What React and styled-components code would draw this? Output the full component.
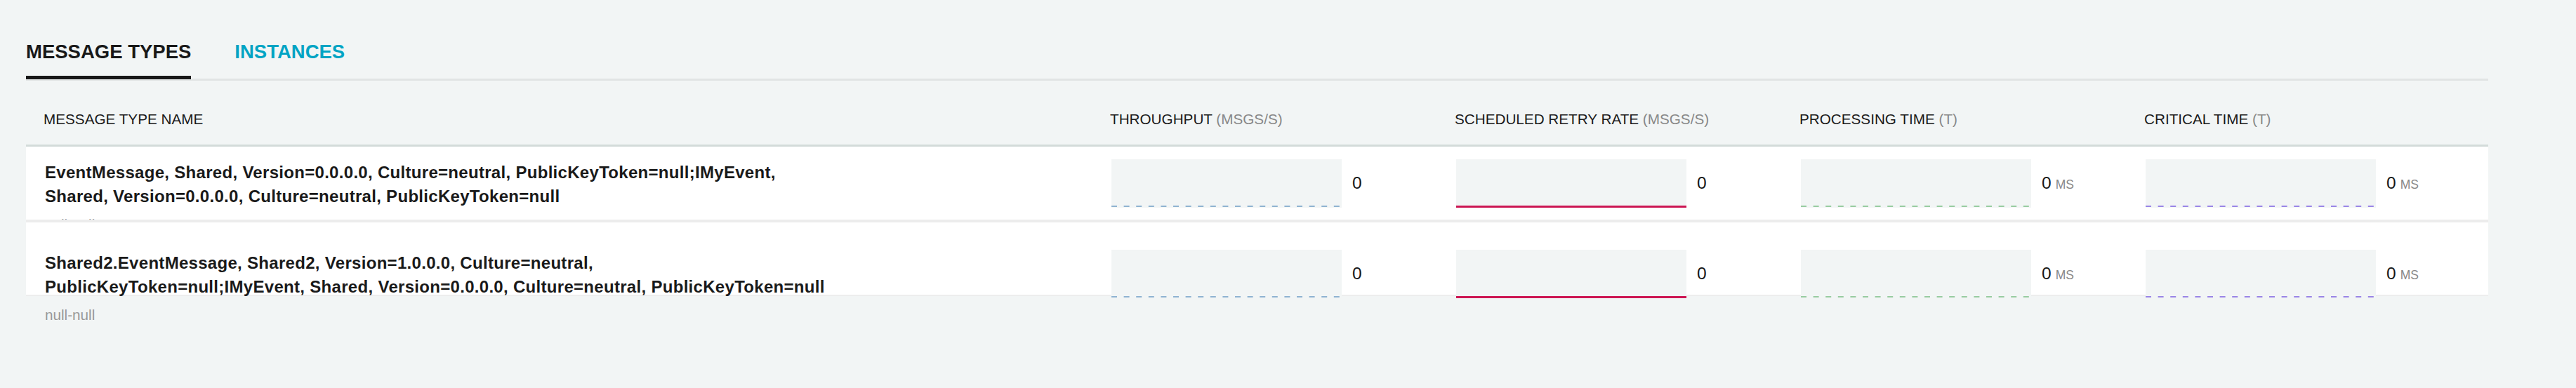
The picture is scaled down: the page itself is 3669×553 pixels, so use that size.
import React from 'react';
import styled, { createGlobalStyle } from 'styled-components';

const GlobalStyle = createGlobalStyle`
    body {
        margin: 0;
        background: #f2f5f5;
        font-family: "Liberation Sans", Arial, sans-serif;
        color: #1a1a1a;
    }
`;

const Page = styled.div`
    width: 3544px;
    min-height: 553px;
    box-sizing: border-box;
    padding: 58px 0 0 37px;
`;

const TabBar = styled.div`
    display: flex;
    gap: 62px;
    border-bottom: 3px solid #e1e4e4;
`;

const Tab = styled.div`
    font-size: 27.5px;
    font-weight: bold;
    line-height: 32px;
    padding-bottom: 18px;
    margin-bottom: -1px;
    color: ${p => (p.$active ? '#181818' : '#00a4c4')};
    border-bottom: 5px solid ${p => (p.$active ? '#181818' : 'transparent')};
`;

const columns = '1544px repeat(4, 491px)';

const HeaderRow = styled.div`
    display: grid;
    grid-template-columns: ${columns};
    padding: 43px 0 24px;
    border-bottom: 3px solid #d3dbd9;
`;

const HeadCell = styled.div`
    font-size: 20.7px;
    line-height: 24px;
    color: #1a1a1a;
    padding-left: ${p => p.$pad || 0}px;
    span {
        color: #888;
    }
`;

const Row = styled.div`
    position: relative;
    display: flow-root;
    height: 104px;
    background: #fff;
    & + & {
        border-top: 4px solid #ececec;
        height: 103px;
    }
    &:last-child {
        border-bottom: 2px solid #ededed;
    }
`;

const Cells = styled.div`
    display: grid;
    grid-template-columns: ${columns};
    align-items: start;
    margin-top: ${p => p.$shift || 0}px;
`;

const NameCell = styled.div`
    padding: 20px 0 0 27px;
`;

const NameText = styled.div`
    font-size: 24px;
    font-weight: bold;
    letter-spacing: 0.3px;
    line-height: 34px;
    color: #1a1a1a;
    max-width: 1124px;
`;

const SubText = styled.div`
    font-size: 20.7px;
    line-height: 24px;
    color: #999;
    margin-top: 11px;
`;

const ChartCell = styled.div`
    display: flex;
    align-items: center;
    gap: 15px;
    padding-top: 18px;
`;

const ChartBox = styled.div`
    width: 328px;
    height: 69px;
    margin-left: 2px;
    background: #f2f5f5;
    svg {
        display: block;
    }
`;

const Value = styled.div`
    font-size: 24.5px;
    line-height: 1;
    color: #181818;
    span {
        font-size: 17.5px;
        color: #888;
        margin-left: 6px;
    }
`;

const metrics = [
    { key: 'throughput', title: 'THROUGHPUT', unit: 'MSGS/S', color: '#8fb3d1', dashed: true },
    { key: 'retry', title: 'SCHEDULED RETRY RATE', unit: 'MSGS/S', color: '#cc1552', dashed: false },
    { key: 'processing', title: 'PROCESSING TIME', unit: 'T', color: '#98cca0', dashed: true, suffix: 'MS' },
    { key: 'critical', title: 'CRITICAL TIME', unit: 'T', color: '#9a85e6', dashed: true, suffix: 'MS' },
];

const rows = [
    {
        name: 'EventMessage, Shared, Version=0.0.0.0, Culture=neutral, PublicKeyToken=null;IMyEvent, Shared, Version=0.0.0.0, Culture=neutral, PublicKeyToken=null',
        shift: 0,
    },
    {
        name: 'Shared2.EventMessage, Shared2, Version=1.0.0.0, Culture=neutral, PublicKeyToken=null;IMyEvent, Shared, Version=0.0.0.0, Culture=neutral, PublicKeyToken=null',
        shift: 21,
    },
];

const Sparkline = ({ color, dashed }) => (
    <svg width="328" height="69">
        {dashed ? (
            <line x1="0" y1="67" x2="326" y2="67" stroke={color} strokeWidth="2" strokeDasharray="8 9.6" />
        ) : (
            <line x1="0" y1="67.5" x2="328" y2="67.5" stroke={color} strokeWidth="3" />
        )}
    </svg>
);

const App = () => {
    return (
        <Page>
            <GlobalStyle />
            <TabBar>
                <Tab $active>MESSAGE TYPES</Tab>
                <Tab>INSTANCES</Tab>
            </TabBar>
            <HeaderRow>
                <HeadCell $pad={25}>MESSAGE TYPE NAME</HeadCell>
                {metrics.map(m => (
                    <HeadCell key={m.key}>{m.title} <span>({m.unit})</span></HeadCell>
                ))}
            </HeaderRow>
            {rows.map(r => (
                <Row key={r.name}>
                    <Cells $shift={r.shift}>
                        <NameCell>
                            <NameText>{r.name}</NameText>
                            <SubText>null-null</SubText>
                        </NameCell>
                        {metrics.map(m => (
                            <ChartCell key={m.key}>
                                <ChartBox>
                                    <Sparkline color={m.color} dashed={m.dashed} />
                                </ChartBox>
                                <Value>0{m.suffix && <span>{m.suffix}</span>}</Value>
                            </ChartCell>
                        ))}
                    </Cells>
                </Row>
            ))}
        </Page>
    );
};

export default App;
